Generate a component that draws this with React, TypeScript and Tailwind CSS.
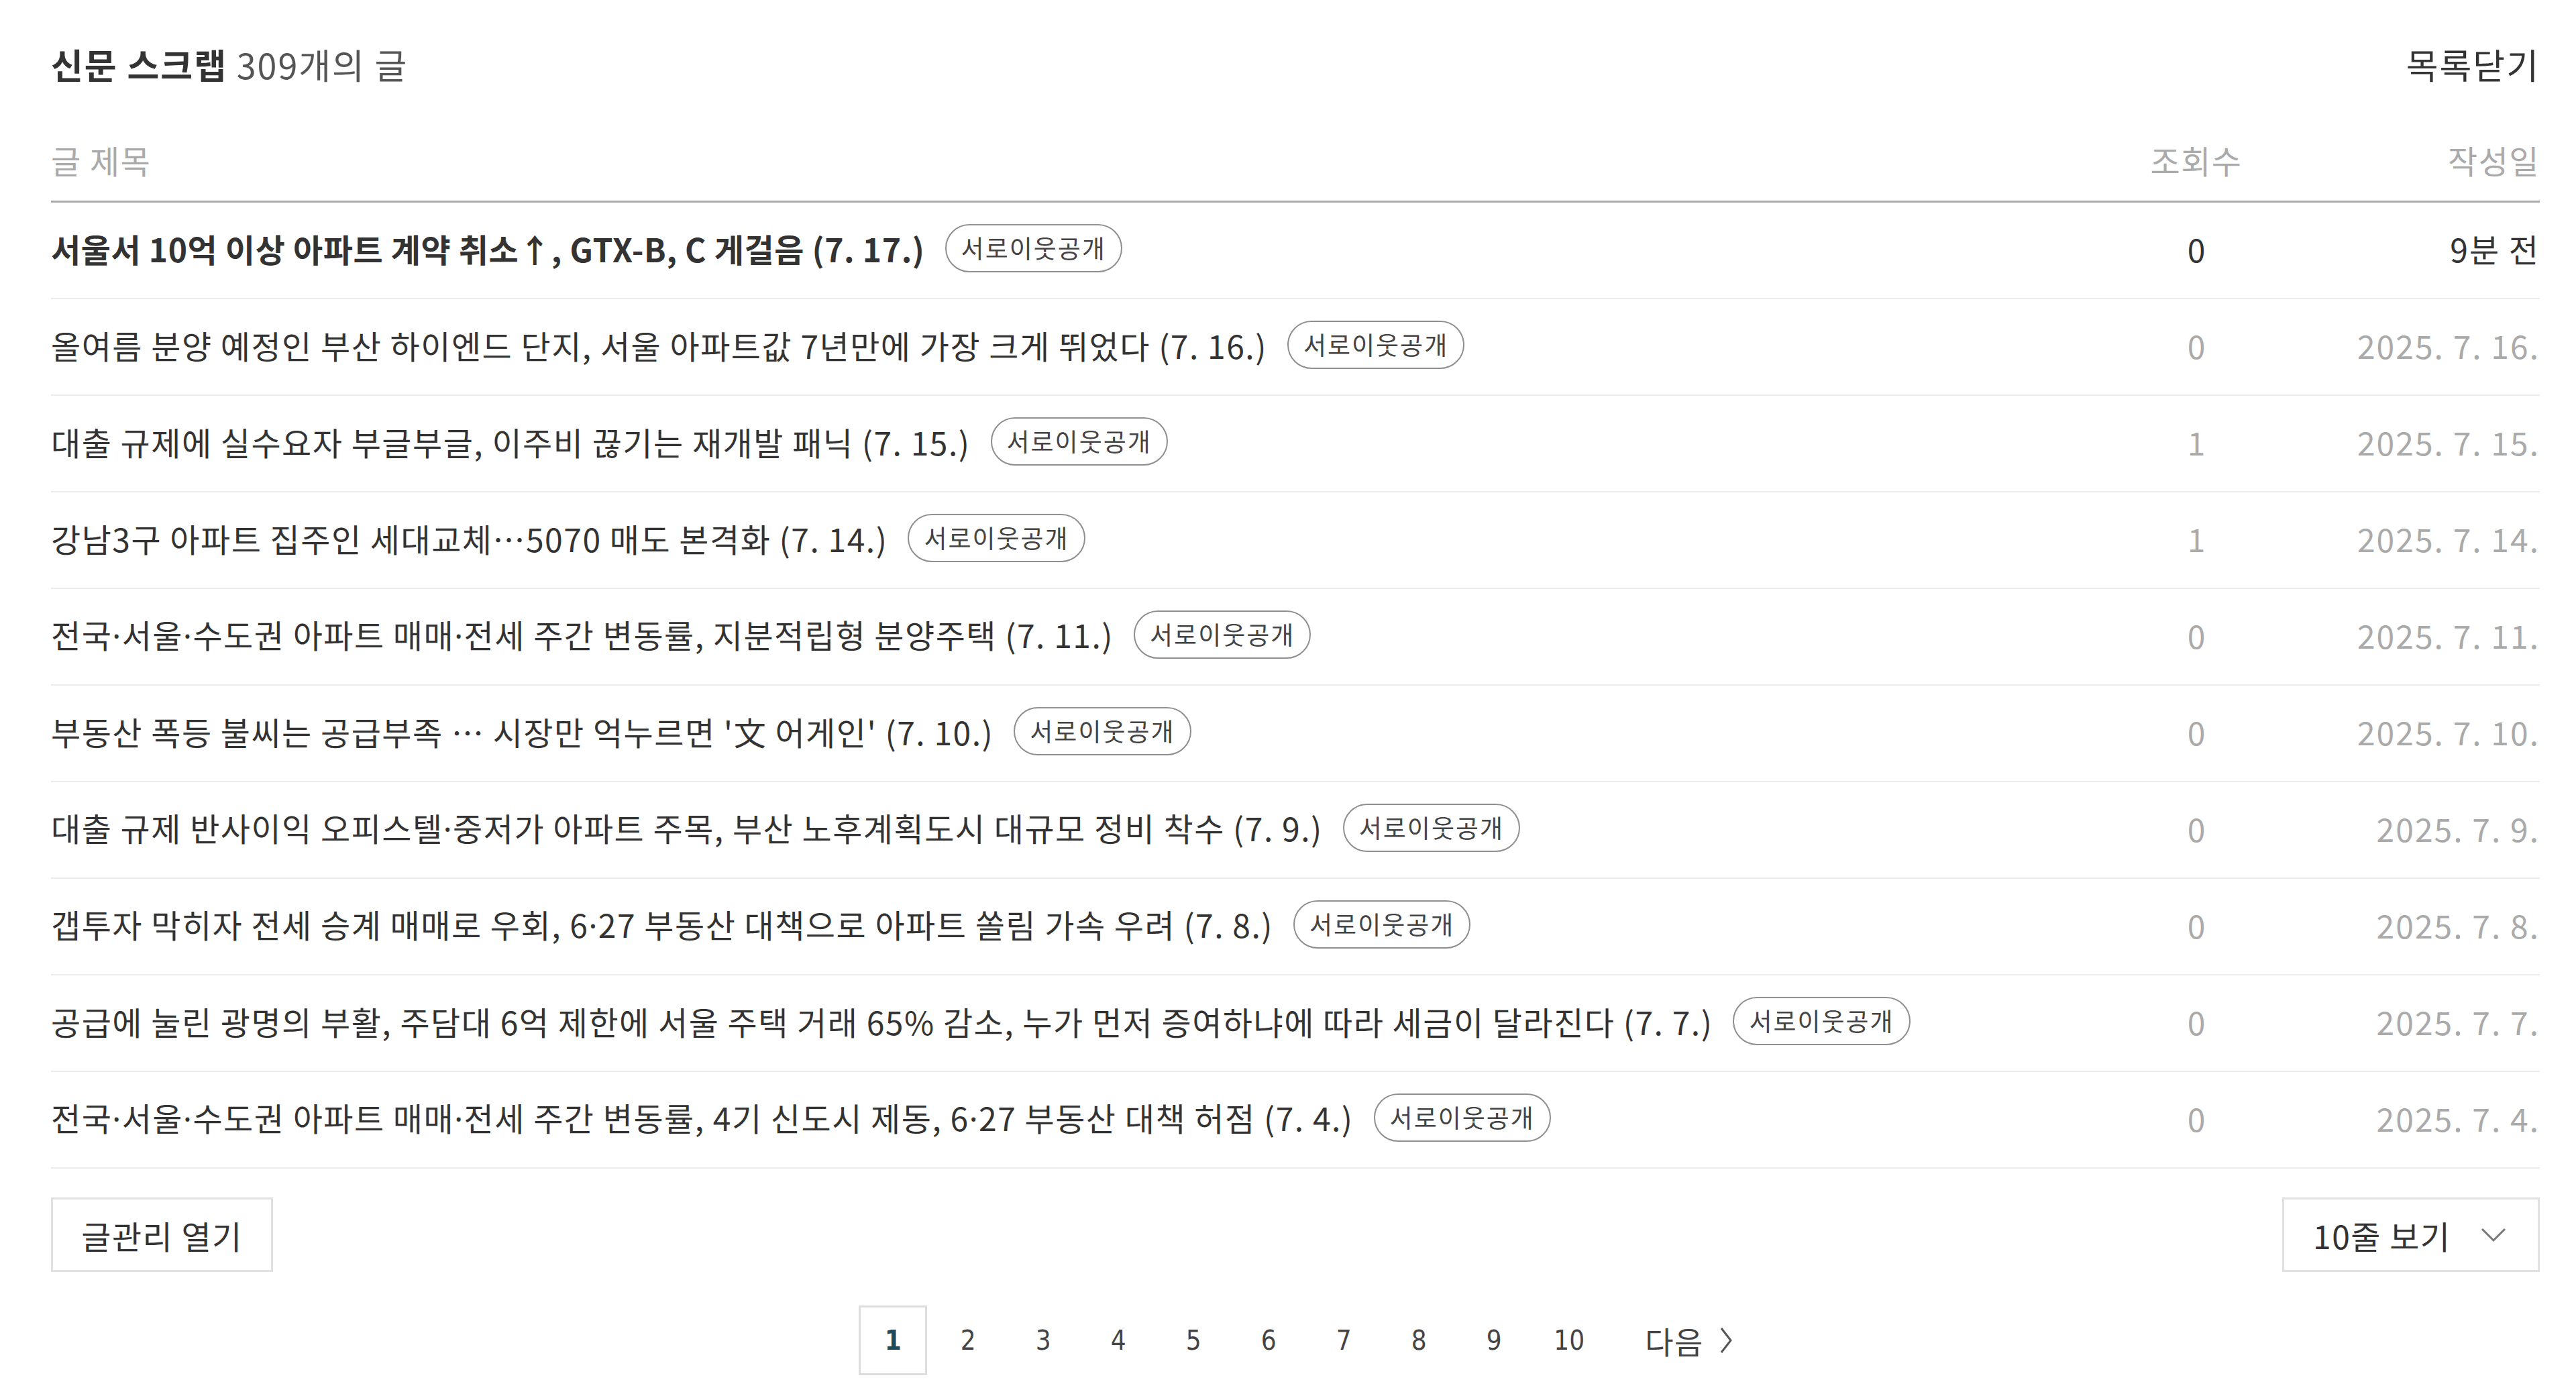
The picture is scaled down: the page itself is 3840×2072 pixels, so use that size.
import React from "react";

type Row = { title: string; views: string; date: string; bold?: boolean };

const rows: Row[] = [
  { title: "서울서 10억 이상 아파트 계약 취소↑, GTX-B, C 게걸음 (7. 17.)", views: "0", date: "9분 전", bold: true },
  { title: "올여름 분양 예정인 부산 하이엔드 단지, 서울 아파트값 7년만에 가장 크게 뛰었다 (7. 16.)", views: "0", date: "2025. 7. 16." },
  { title: "대출 규제에 실수요자 부글부글, 이주비 끊기는 재개발 패닉 (7. 15.)", views: "1", date: "2025. 7. 15." },
  { title: "강남3구 아파트 집주인 세대교체…5070 매도 본격화 (7. 14.)", views: "1", date: "2025. 7. 14." },
  { title: "전국·서울·수도권 아파트 매매·전세 주간 변동률, 지분적립형 분양주택 (7. 11.)", views: "0", date: "2025. 7. 11." },
  { title: "부동산 폭등 불씨는 공급부족 … 시장만 억누르면 '文 어게인' (7. 10.)", views: "0", date: "2025. 7. 10." },
  { title: "대출 규제 반사이익 오피스텔·중저가 아파트 주목, 부산 노후계획도시 대규모 정비 착수 (7. 9.)", views: "0", date: "2025. 7. 9." },
  { title: "갭투자 막히자 전세 승계 매매로 우회, 6·27 부동산 대책으로 아파트 쏠림 가속 우려 (7. 8.)", views: "0", date: "2025. 7. 8." },
  { title: "공급에 눌린 광명의 부활, 주담대 6억 제한에 서울 주택 거래 65% 감소, 누가 먼저 증여하냐에 따라 세금이 달라진다 (7. 7.)", views: "0", date: "2025. 7. 7." },
  { title: "전국·서울·수도권 아파트 매매·전세 주간 변동률, 4기 신도시 제동, 6·27 부동산 대책 허점 (7. 4.)", views: "0", date: "2025. 7. 4." },
];

const font = { fontFamily: '"Noto Sans CJK KR", "Noto Sans", sans-serif' };
const dotFont = { fontFamily: '"Noto Sans", "Liberation Sans", sans-serif' };

function Title({ text }: { text: string }) {
  const parts = text.split("·");
  return (
    <>
      {parts.map((p, i) => (
        <React.Fragment key={i}>
          {i > 0 && <span style={dotFont}>·</span>}
          {p}
        </React.Fragment>
      ))}
    </>
  );
}

export default function App() {
  return (
    <div
      className="w-[3840px] h-[2072px] bg-white pl-[76px] pr-[54px] text-[#333]"
      style={font}
    >
      {/* Title row */}
      <div className="pt-[46px] h-[146px] flex items-center justify-between">
        <div className="text-[52px] leading-[100px] tracking-[2px]">
          <span className="font-bold text-[#333]">신문 스크랩</span>
          <span className="text-[#555]"> 309개의 글</span>
        </div>
        <div className="text-[52px] leading-[100px] text-[#333] tracking-[2px]">목록닫기</div>
      </div>

      {/* Header */}
      <div className="flex items-center pt-[62px] pb-[31px] border-b-[3px] border-[#a9a9a9] text-[48px] leading-[60px] text-[#aaaaaa] tracking-[1.5px]">
        <div className="flex-1">글 제목</div>
        <div className="w-[224px] text-center">조회수</div>
        <div className="w-[400px] text-right">작성일</div>
      </div>

      {/* Rows */}
      <div>
        {rows.map((r, i) => (
          <div
            key={i}
            className="h-[144px] pb-[6px] flex items-center border-b-2 border-[#ebebeb] text-[48px]"
          >
            <div className="flex-1 flex items-center min-w-0">
              <span
                className={
                  r.bold
                    ? "font-bold text-[#333] tracking-[0.6px]"
                    : "text-[#333] tracking-[1.5px]"
                }
              >
                <Title text={r.title} />
              </span>
              <span className="ml-[30px] h-[72px] px-[22px] flex items-center rounded-full border-2 border-[#8f8f8f] text-[37px] text-[#444] tracking-[2px] whitespace-nowrap">
                서로이웃공개
              </span>
            </div>
            <div className={"w-[224px] text-center " + (r.bold ? "text-[#333]" : "text-[#aaaaaa]")}>
              {r.views}
            </div>
            <div
              className={
                "w-[400px] text-right tracking-[2px] " + (r.bold ? "text-[#333]" : "text-[#aaaaaa]")
              }
            >
              {r.date}
            </div>
          </div>
        ))}
      </div>

      {/* Buttons */}
      <div className="mt-[43px] flex justify-between">
        <button className="h-[111px] w-[331px] border-[3px] border-[#e1e1e1] bg-white text-[48px] text-[#333] tracking-[1.5px]">
          글관리 열기
        </button>
        <button className="h-[111px] w-[384px] border-[3px] border-[#e1e1e1] bg-white text-[48px] text-[#333] tracking-[1.5px] flex items-center pl-[43px]">
          <span>10줄 보기</span>
          <svg className="ml-[44px]" width="38" height="22" viewBox="0 0 38 22" fill="none">
            <path d="M2 2 L19 19 L36 2" stroke="#777" strokeWidth="3" />
          </svg>
        </button>
      </div>

      {/* Pagination */}
      <div className="mt-[50px] flex justify-center">
        <div
          className="flex items-center gap-[10px] text-[40px] text-[#444]"
          style={{ fontFamily: '"DejaVu Sans Condensed", "DejaVu Sans", sans-serif' }}
        >
          <span className="w-[102px] h-[104px] flex items-center justify-center border-[3px] border-[#dddddd] font-bold text-[#1c4a5c]">
            1
          </span>
          {["2", "3", "4", "5", "6", "7", "8", "9", "10"].map((n) => (
            <span key={n} className="w-[102px] h-[104px] flex items-center justify-center">
              {n}
            </span>
          ))}
          <span
            className="ml-[52px] h-[104px] flex items-center text-[46px] text-[#444] tracking-[1.5px]"
            style={font}
          >
            다음
            <svg className="ml-[24px]" width="18" height="40" viewBox="0 0 18 40" fill="none">
              <path d="M2 2 L16 20 L2 38" stroke="#555" strokeWidth="3" />
            </svg>
          </span>
        </div>
      </div>
    </div>
  );
}
